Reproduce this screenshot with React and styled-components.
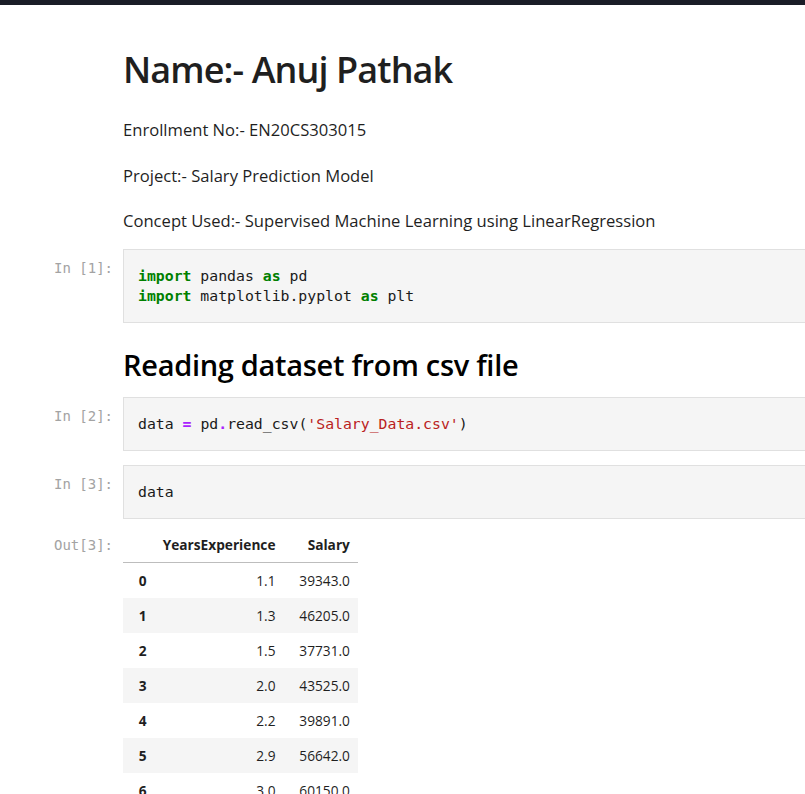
import React from 'react';
import styled, { createGlobalStyle } from 'styled-components';

const GlobalStyle = createGlobalStyle`
  html, body {
    margin: 0;
    padding: 0;
    background: #ffffff;
  }
  body {
    font-family: "Open Sans", "Noto Sans", sans-serif;
    color: #000;
    overflow: hidden;
  }
`;

const TopBar = styled.div`
  height: 5px;
  background: #1a1d27;
`;

const Notebook = styled.div`
  padding-top: 40px;
  display: flex;
  flex-direction: column;
`;

const Cell = styled.div`
  display: flex;
  align-items: flex-start;
  margin-bottom: ${(p) => p.gap || 0}px;
`;

const Prompt = styled.div`
  flex: 0 0 115px;
  box-sizing: border-box;
  padding-right: 2px;
  padding-top: ${(p) => p.top || 9}px;
  text-align: right;
  font-family: "DejaVu Sans Mono", monospace;
  font-size: 14px;
  line-height: 20px;
  color: #a3a3a3;
`;

const Body = styled.div`
  flex: 1;
  margin-left: 8px;
  min-width: 0;
`;

const Markdown = styled.div`
  display: flex;
  flex-direction: column;
  gap: 21.5px;
  padding-bottom: 16px;
  color: #1f1f1f;
`;

const Title = styled.h1`
  margin: 0 0 1.5px;
  font-size: 36px;
  font-weight: 600;
  line-height: 50px;
  letter-spacing: -0.9px;
`;

const Para = styled.p`
  margin: 0;
  font-size: 16.6px;
  line-height: 24px;
`;

const SubTitle = styled.h2`
  margin: 0;
  font-size: 29px;
  font-weight: 600;
  line-height: 40px;
  letter-spacing: -0.3px;
`;

const InputBox = styled.pre`
  margin: 0;
  margin-right: -40px;
  padding: 16px 14px;
  background: #f5f5f5;
  border: 1px solid #e0e0e0;
  font-family: "DejaVu Sans Mono", monospace;
  font-size: 14.8px;
  line-height: 20px;
  color: #1a1a1a;
`;

const Kw = styled.span`
  color: #008000;
  font-weight: bold;
`;

const Op = styled.span`
  color: #aa22ff;
  font-weight: bold;
`;

const Str = styled.span`
  color: #ba2121;
`;

const Table = styled.table`
  border-collapse: collapse;
  border-spacing: 0;
  font-family: "Open Sans", "Noto Sans", sans-serif;
  font-size: 13.7px;
  color: #1f1f1f;
`;

const Th = styled.th`
  text-align: right;
  padding: 0 8px;
  height: 35px;
  font-weight: 700;
`;

const HeadRow = styled.tr`
  border-bottom: 1px solid #bdbdbd;
`;

const Row = styled.tr`
  background: ${(p) => (p.odd ? '#f5f5f5' : '#ffffff')};
`;

const Td = styled.td`
  text-align: right;
  padding: 0 8px;
  height: 35px;
`;

const salary = [
  [1.1, 39343], [1.3, 46205], [1.5, 37731], [2.0, 43525], [2.2, 39891],
  [2.9, 56642], [3.0, 60150], [3.2, 54445], [3.2, 64445], [3.7, 57189],
  [3.9, 63218], [4.0, 55794], [4.0, 56957], [4.1, 57081], [4.5, 61111],
  [4.9, 67938], [5.1, 66029], [5.3, 83088], [5.9, 81363], [6.0, 93940],
  [6.8, 91738], [7.1, 98273], [7.9, 101302], [8.2, 113812], [8.7, 109431],
  [9.0, 105582], [9.5, 116969], [9.6, 112635], [10.3, 122391], [10.5, 121872],
];

const App = () => {
  return (
    <>
      <GlobalStyle />
      <TopBar />
      <Notebook>
        <Cell>
          <Prompt />
          <Body>
            <Markdown>
              <Title>Name:- Anuj Pathak</Title>
              <Para>Enrollment No:- EN20CS303015</Para>
              <Para>Project:- Salary Prediction Model</Para>
              <Para>Concept Used:- Supervised Machine Learning using LinearRegression</Para>
            </Markdown>
          </Body>
        </Cell>

        <Cell gap={22}>
          <Prompt>In&nbsp;[1]:</Prompt>
          <Body>
            <InputBox>
              <Kw>import</Kw> pandas <Kw>as</Kw> pd{'\n'}
              <Kw>import</Kw> matplotlib.pyplot <Kw>as</Kw> plt
            </InputBox>
          </Body>
        </Cell>

        <Cell gap={12}>
          <Prompt />
          <Body>
            <SubTitle>Reading dataset from csv file</SubTitle>
          </Body>
        </Cell>

        <Cell gap={14}>
          <Prompt>In&nbsp;[2]:</Prompt>
          <Body>
            <InputBox>
              data <Op>=</Op> pd<Op>.</Op>read_csv(<Str>'Salary_Data.csv'</Str>)
            </InputBox>
          </Body>
        </Cell>

        <Cell gap={8}>
          <Prompt>In&nbsp;[3]:</Prompt>
          <Body>
            <InputBox>data</InputBox>
          </Body>
        </Cell>

        <Cell>
          <Prompt top={8}>Out[3]:</Prompt>
          <Body>
            <Table>
              <thead>
                <HeadRow>
                  <Th />
                  <Th>YearsExperience</Th>
                  <Th>Salary</Th>
                </HeadRow>
              </thead>
              <tbody>
                {salary.map(([years, pay], i) => (
                  <Row key={i} odd={i % 2 === 1}>
                    <Th>{i}</Th>
                    <Td>{years.toFixed(1)}</Td>
                    <Td>{pay.toFixed(1)}</Td>
                  </Row>
                ))}
              </tbody>
            </Table>
          </Body>
        </Cell>
      </Notebook>
    </>
  );
};

export default App;
